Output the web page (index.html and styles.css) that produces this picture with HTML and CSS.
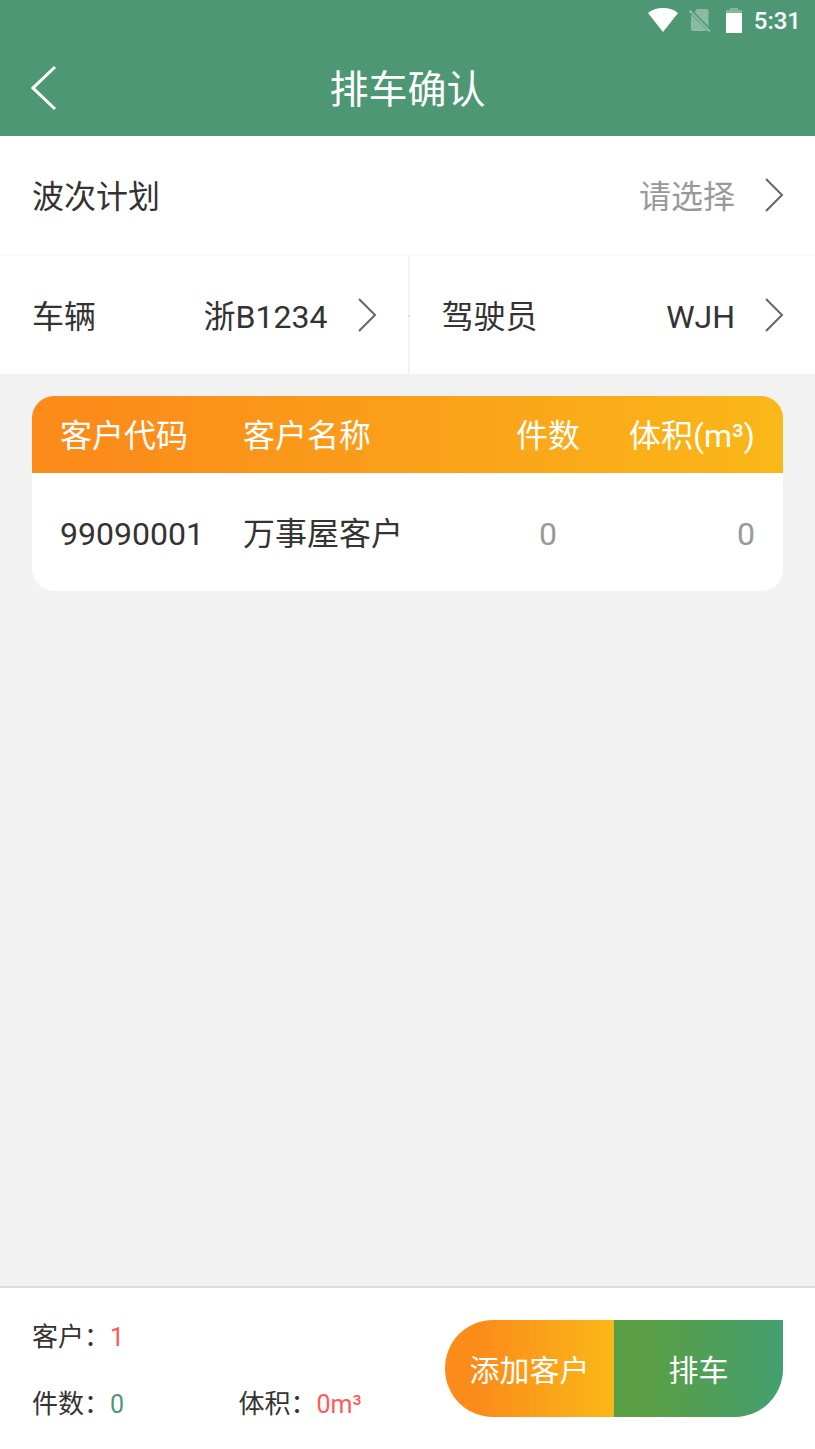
FILE: index.html
```html
<!DOCTYPE html>
<html lang="zh-CN">
<head>
  <meta charset="UTF-8">
  <meta name="viewport" content="width=device-width, initial-scale=1.0">
  <title>排车确认</title>
  <link rel="stylesheet" href="styles.css">
</head>
<body>
  <header class="header">
    <div class="status-bar">
      <svg class="wifi" width="30" height="24" viewBox="0 0 30 24"><path d="M15 24L0 5Q6 0 15 0T30 5Z" fill="#fff"/></svg>
      <svg class="sim" width="22" height="25" viewBox="0 0 22 25">
        <path d="M8 1H17.500Q19.500 1 19.500 3V18.500L5.500 4ZM2 6.500L18.500 23H4Q2 23 2 21Z" fill="#fff"/>
        <path d="M0.500 2.500L21 23.500" stroke="#fff" stroke-width="2"/>
      </svg>
      <svg class="battery" width="16" height="25" viewBox="0 0 16 25">
        <path d="M4 0H12V2H16V5H0V2H4Z" fill="#fff" opacity="0.3"/>
        <path d="M0 5H16V25H0Z" fill="#fff"/>
      </svg>
      <span class="time">5:31</span>
    </div>
    <div class="title-bar">
      <button class="back" type="button" aria-label="返回">
        <svg width="26" height="46" viewBox="0 0 26 46"><path d="M24 2L2 23L24 44" fill="none" stroke="#fff" stroke-width="3"/></svg>
      </button>
      <h1>排车确认</h1>
    </div>
  </header>

  <section class="options">
    <button class="option" type="button">
      <span class="option-label">波次计划</span>
      <span class="option-value placeholder">请选择</span>
      <svg class="arrow" width="20" height="34" viewBox="0 0 20 34"><path d="M2 1L18 17L2 33"/></svg>
    </button>
    <div class="option-row">
      <button class="option" type="button">
        <span class="option-label">车辆</span>
        <span class="option-value">浙B1234</span>
        <svg class="arrow" width="20" height="34" viewBox="0 0 20 34"><path d="M2 1L18 17L2 33"/></svg>
      </button>
      <button class="option" type="button">
        <span class="option-label">驾驶员</span>
        <span class="option-value">WJH</span>
        <svg class="arrow" width="20" height="34" viewBox="0 0 20 34"><path d="M2 1L18 17L2 33"/></svg>
      </button>
    </div>
  </section>

  <main>
    <table class="customers">
      <thead>
        <tr>
          <th class="code">客户代码</th>
          <th class="name">客户名称</th>
          <th class="count">件数</th>
          <th class="volume">体积(m³)</th>
        </tr>
      </thead>
      <tbody>
        <tr>
          <td class="code">99090001</td>
          <td class="name">万事屋客户</td>
          <td class="count">0</td>
          <td class="volume">0</td>
        </tr>
      </tbody>
    </table>
  </main>

  <footer class="footer">
    <div class="totals">
      <div class="total wide">客户：<span class="red">1</span></div>
      <div class="total">件数：<span class="green">0</span></div>
      <div class="total">体积：<span class="red">0m³</span></div>
    </div>
    <div class="actions">
      <button class="add" type="button">添加客户</button>
      <button class="submit" type="button">排车</button>
    </div>
  </footer>
</body>
</html>
```

FILE: styles.css
```css
* {
  box-sizing: border-box;
}
body {
  margin: 0;
  min-height: 100vh;
  display: flex;
  flex-direction: column;
  background: #f2f2f2;
  color: #333;
  font-family: Roboto, "Noto Sans CJK SC", sans-serif;
  font-size: 32px;
  line-height: 40px;
}
button {
  margin: 0;
  padding: 0;
  border: none;
  background: none;
  color: inherit;
  font: inherit;
  cursor: pointer;
}
svg {
  display: block;
  flex: none;
}

/* header */
.header {
  background: #4d9775;
  color: #fff;
}
.status-bar {
  display: flex;
  justify-content: flex-end;
  align-items: center;
  height: 40px;
  padding-right: 14px;
}
.sim {
  margin-left: 11px;
  opacity: 0.35;
}
.battery {
  margin-left: 15px;
}
.time {
  margin-left: 12px;
  padding-top: 2px;
  font-size: 24px;
  line-height: 38px;
  font-weight: 500;
}
.title-bar {
  display: grid;
  grid-template-columns: 60px 1fr 60px;
  align-items: center;
  height: 96px;
}
.back {
  padding-left: 31px;
}
h1 {
  margin: 0;
  padding-top: 4px;
  text-align: center;
  font-size: 39px;
  font-weight: 400;
}

/* pickers */
.options {
  background: #fff;
}
.option {
  display: flex;
  align-items: center;
  width: 100%;
  height: 118px;
  padding: 0 31px 0 32px;
}
.option-row {
  position: relative;
  display: grid;
  grid-template-columns: 1fr 1fr;
  border-top: 2px solid #f9f9f9;
}
.option-row .option + .option {
  border-left: 2px solid #f3f3f3;
}
/* small mark in the middle of the divider */
.option-row::after {
  content: "";
  position: absolute;
  top: 50%;
  left: 50%;
  width: 2px;
  height: 2px;
  background: #ddd;
}
.option-label, .option-value {
  padding-top: 4px;
}
.option-value {
  margin-left: auto;
}
.placeholder {
  color: #999;
}
.arrow {
  margin-left: 29px;
  fill: none;
  stroke: #666;
  stroke-width: 2;
}

/* customer table */
main {
  flex: 1;
  padding: 22px 32px;
}
.customers {
  width: 100%;
  table-layout: fixed;
  border-spacing: 0;
  border-radius: 22px;
  overflow: hidden;
  background: #fff;
}
.customers thead {
  background: linear-gradient(to right, #fb8c1a 10%, #fab818);
  color: #fff;
}
th, td {
  height: 77px;
  padding: 2px 0 0;
  font-weight: 400;
  text-align: left;
  white-space: nowrap;
}
td {
  height: 118px;
  padding-top: 4px;
}
th.code, td.code {
  width: 211px;
  padding-left: 28px;
}
.count {
  width: 150px;
  text-align: center;
}
th.volume, td.volume {
  width: 160px;
  padding-right: 28px;
  text-align: right;
}
td.count, td.volume {
  color: #999;
}

/* bottom bar */
.footer {
  display: flex;
  justify-content: space-between;
  align-items: flex-start;
  padding: 16px 32px 11px;
  border-top: 2px solid #ddd;
  background: #fff;
}
.totals {
  flex: 1;
  display: grid;
  grid-template-columns: 1fr 1fr;
  font-size: 26px;
  line-height: 66px;
}
.total span {
  font-size: 25px;
}
.wide {
  grid-column: span 2;
}
.red {
  color: #ff5a57;
}
.green {
  color: #4d9775;
}
.actions {
  display: flex;
  width: 45%;
  height: 97px;
  margin-top: 16px;
  border-radius: 48px 0 48px 48px;
  overflow: hidden;
  color: #fff;
  font-size: 30px;
}
.actions button {
  flex: 1;
  padding-top: 4px;
}
.add {
  background: linear-gradient(to right, #fb8c1a 20%, #fab818);
}
.submit {
  background: linear-gradient(to right, #5a9f45 20%, #439f70);
}
```
